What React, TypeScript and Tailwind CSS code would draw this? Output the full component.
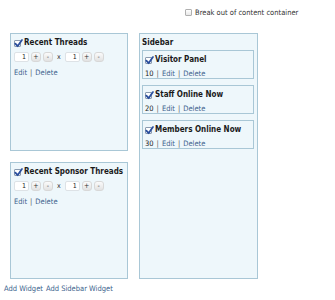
import React from "react";

const font = { fontFamily: '"DejaVu Sans Condensed", "DejaVu Sans", sans-serif' };

function Check({ checked = true }: { checked?: boolean }) {
  return (
    <span className="relative inline-block w-[7px] h-[7px] shrink-0 rounded-[1px] border border-[#8a9bb0] bg-white">
      {checked && (
        <svg viewBox="0 0 10 10" className="absolute left-[-1px] top-[-2px] w-[9px] h-[9px]">
          <path d="M1.5 5.2 L4 8 L8.8 1.2" fill="none" stroke="#2b4f9e" strokeWidth="2" strokeLinecap="round" strokeLinejoin="round" />
        </svg>
      )}
    </span>
  );
}

function Num() {
  return (
    <span className="inline-flex items-center justify-end w-[15px] h-[10px] pr-[2px] bg-white border border-[#dde2e6] rounded-[2px] text-[7px] text-[#222] leading-none">
      1
    </span>
  );
}

function Btn({ t }: { t: string }) {
  return (
    <span className="inline-flex items-center justify-center w-[10px] h-[10px] rounded-[3px] bg-[linear-gradient(#fbfbfb,#e2e2e2)] border border-[#d8d8d8] text-[7px] text-[#333] leading-none">
      {t}
    </span>
  );
}

function Controls() {
  return (
    <div className="flex items-center gap-[2px] mt-[5px]">
      <Num />
      <Btn t="+" />
      <Btn t="-" />
      <span className="text-[7px] text-[#333] mx-[2px] leading-none">x</span>
      <Num />
      <Btn t="+" />
      <Btn t="-" />
    </div>
  );
}

function Links({ prefix }: { prefix?: string }) {
  return (
    <div className="flex items-center gap-[3px] text-[7.5px] leading-none text-[#3b5f8c]">
      {prefix && (
        <>
          <span className="text-[#222]">{prefix}</span>
          <span className="text-[#555]">|</span>
        </>
      )}
      <span>Edit</span>
      <span className="text-[#555]">|</span>
      <span>Delete</span>
    </div>
  );
}

function Title({ text }: { text: string }) {
  return (
    <div className="flex items-center gap-[3px]">
      <Check />
      <span className="text-[8px] font-bold text-[#1a1a1a] leading-none">{text}</span>
    </div>
  );
}

function LeftBox({ title, h }: { title: string; h: string }) {
  return (
    <div className={`${h} border border-[#a9c7d6] bg-[#eef7fb] pt-[5px] px-[3px]`}>
      <Title text={title} />
      <Controls />
      <div className="mt-[7px]">
        <Links />
      </div>
    </div>
  );
}

function SideBox({ title, n }: { title: string; n: string }) {
  return (
    <div className="h-[29px] border border-[#a9c7d6] bg-[#eef7fb] pt-[5px] px-[2px] flex flex-col gap-[6px]">
      <Title text={title} />
      <Links prefix={n} />
    </div>
  );
}

export default function App() {
  return (
    <div className="w-[335px] h-[300px] bg-white overflow-hidden px-[4px]" style={font}>
      <div className="flex items-start gap-[3px] pl-[181px] pt-[9px] h-[33px]">
        <span className="inline-block w-[7px] h-[7px] rounded-[1px] border border-[#b0b0b0] bg-[linear-gradient(#fff,#e8e8e8)]" />
        <span className="text-[7.5px] leading-none text-[#333]">Break out of content container</span>
      </div>
      <div className="flex gap-[11px] pl-[6px]">
        <div className="w-[118px] flex flex-col gap-[11px]">
          <LeftBox title="Recent Threads" h="h-[118px]" />
          <LeftBox title="Recent Sponsor Threads" h="h-[117px]" />
        </div>
        <div className="w-[119px] h-[246px] border border-[#a9c7d6] bg-[#eef7fb] pt-[5px] pl-[2px] pr-[3px]">
          <div className="text-[8px] font-bold text-[#1a1a1a] leading-none">Sidebar</div>
          <div className="flex flex-col gap-[6px] mt-[3px]">
            <SideBox title="Visitor Panel" n="10" />
            <SideBox title="Staff Online Now" n="20" />
            <SideBox title="Members Online Now" n="30" />
          </div>
        </div>
      </div>
      <div className="flex gap-[3px] mt-[6px] text-[7.5px] leading-none text-[#3b5f8c]">
        <span>Add Widget</span>
        <span>Add Sidebar Widget</span>
      </div>
    </div>
  );
}
